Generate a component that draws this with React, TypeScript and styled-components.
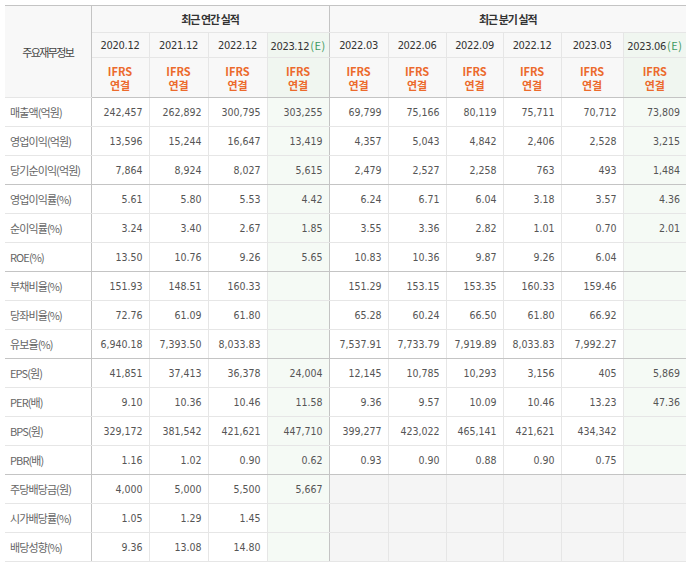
import styled, { createGlobalStyle } from "styled-components";

const GlobalStyle = createGlobalStyle`
	body {
		margin: 0;
		background: #fff;
	}
`;

const NUM_FONT = `"DejaVu Sans Condensed", "DejaVu Sans", "Noto Sans CJK KR", sans-serif`;
const KR_FONT = `"Noto Sans CJK KR", "DejaVu Sans", sans-serif`;

const LINE = "#e6e6e6";
const STRONG_LINE = "#c4c4c4";
const EST_HEAD_BG = "#f0f6f0";
const EST_BG = "#f5faf5";
const HEAD_BG = "#f8f8f8";
const BLANK_BG = "#f5f5f5";

type Period = { label: string; est?: boolean };

const annual: Period[] = [
	{ label: "2020.12" },
	{ label: "2021.12" },
	{ label: "2022.12" },
	{ label: "2023.12", est: true },
];

const quarter: Period[] = [
	{ label: "2022.03" },
	{ label: "2022.06" },
	{ label: "2022.09" },
	{ label: "2022.12" },
	{ label: "2023.03" },
	{ label: "2023.06", est: true },
];

const colWidths = [86, 58, 59, 59, 62, 59, 58, 57, 58, 62, 63];

// null = 회색 빈칸 (배당 항목의 분기 칸)
type Row = { name: string; values: (string | null)[]; groupEnd?: boolean };

const rows: Row[] = [
	{ name: "매출액(억원)", values: ["242,457", "262,892", "300,795", "303,255", "69,799", "75,166", "80,119", "75,711", "70,712", "73,809"] },
	{ name: "영업이익(억원)", values: ["13,596", "15,244", "16,647", "13,419", "4,357", "5,043", "4,842", "2,406", "2,528", "3,215"] },
	{ name: "당기순이익(억원)", values: ["7,864", "8,924", "8,027", "5,615", "2,479", "2,527", "2,258", "763", "493", "1,484"], groupEnd: true },
	{ name: "영업이익률(%)", values: ["5.61", "5.80", "5.53", "4.42", "6.24", "6.71", "6.04", "3.18", "3.57", "4.36"] },
	{ name: "순이익률(%)", values: ["3.24", "3.40", "2.67", "1.85", "3.55", "3.36", "2.82", "1.01", "0.70", "2.01"] },
	{ name: "ROE(%)", values: ["13.50", "10.76", "9.26", "5.65", "10.83", "10.36", "9.87", "9.26", "6.04", ""], groupEnd: true },
	{ name: "부채비율(%)", values: ["151.93", "148.51", "160.33", "", "151.29", "153.15", "153.35", "160.33", "159.46", ""] },
	{ name: "당좌비율(%)", values: ["72.76", "61.09", "61.80", "", "65.28", "60.24", "66.50", "61.80", "66.92", ""] },
	{ name: "유보율(%)", values: ["6,940.18", "7,393.50", "8,033.83", "", "7,537.91", "7,733.79", "7,919.89", "8,033.83", "7,992.27", ""], groupEnd: true },
	{ name: "EPS(원)", values: ["41,851", "37,413", "36,378", "24,004", "12,145", "10,785", "10,293", "3,156", "405", "5,869"] },
	{ name: "PER(배)", values: ["9.10", "10.36", "10.46", "11.58", "9.36", "9.57", "10.09", "10.46", "13.23", "47.36"] },
	{ name: "BPS(원)", values: ["329,172", "381,542", "421,621", "447,710", "399,277", "423,022", "465,141", "421,621", "434,342", ""] },
	{ name: "PBR(배)", values: ["1.16", "1.02", "0.90", "0.62", "0.93", "0.90", "0.88", "0.90", "0.75", ""], groupEnd: true },
	{ name: "주당배당금(원)", values: ["4,000", "5,000", "5,500", "5,667", null, null, null, null, null, null] },
	{ name: "시가배당률(%)", values: ["1.05", "1.29", "1.45", "", null, null, null, null, null, null] },
	{ name: "배당성향(%)", values: ["9.36", "13.08", "14.80", "", null, null, null, null, null, null] },
];

const Wrap = styled.div`
	padding: 5px 6px 0 5px;
`;

const Table = styled.table`
	width: 681px;
	table-layout: fixed;
	border-collapse: collapse;
	border-top: 1px solid ${STRONG_LINE};
	border-bottom: 1px solid ${STRONG_LINE};
	font-family: ${NUM_FONT};
	font-size: 10.5px;
	color: #555;
`;

const Head = styled.thead`
	tr:last-child th {
		border-bottom: 1px solid ${STRONG_LINE};
	}
`;

const HeadCell = styled.th<{ $est?: boolean; $split?: boolean; $h?: number }>`
	height: ${({ $h }) => ($h ? `${$h - 1}px` : "auto")};
	padding: 0;
	background: ${({ $est }) => ($est ? EST_HEAD_BG : HEAD_BG)};
	border-bottom: 1px solid ${LINE};
	border-left: 1px solid ${({ $split }) => ($split ? STRONG_LINE : LINE)};
	font-weight: normal;
	text-align: center;
	vertical-align: middle;
	color: #333;
`;

const CornerCell = styled(HeadCell)`
	border-left: none;
	border-right: 1px solid ${STRONG_LINE};
	font-family: ${KR_FONT};
	font-size: 11px;
	letter-spacing: -1.6px;
	color: #444;
`;

const GroupTitle = styled(HeadCell)`
	font-family: ${KR_FONT};
	font-size: 11px;
	font-weight: bold;
	letter-spacing: -1px;
	color: #333;
`;

const Period = styled(HeadCell)`
	font-size: 11px;
	letter-spacing: -0.3px;
`;

const Est = styled.span`
	color: #3c9a5f;
	font-family: ${KR_FONT};
	letter-spacing: 0.5px;
	margin-left: 1px;
`;

const Basis = styled(HeadCell)`
	font-family: ${KR_FONT};
	font-size: 11px;
	font-weight: bold;
	line-height: 14px;
	color: #ec6a2c;
`;

const BodyRow = styled.tr<{ $groupEnd?: boolean }>`
	td,
	th {
		height: 28px;
		border-bottom: 1px solid ${({ $groupEnd }) => ($groupEnd ? STRONG_LINE : LINE)};
	}
`;

const RowName = styled.th`
	padding: 0 0 0 5px;
	border-right: 1px solid ${STRONG_LINE};
	text-align: left;
	font-family: ${KR_FONT};
	font-size: 11px;
	font-weight: normal;
	letter-spacing: -0.9px;
	color: #666;
	white-space: nowrap;
`;

const Value = styled.td<{ $est?: boolean; $blank?: boolean; $split?: boolean }>`
	padding: 0 6px 0 0;
	text-align: right;
	background: ${({ $est, $blank }) => ($blank ? BLANK_BG : $est ? EST_BG : "#fff")};
	border-left: 1px solid ${({ $split }) => ($split ? STRONG_LINE : LINE)};
	white-space: nowrap;
`;

export default function App() {
	const periods = [...annual, ...quarter];

	return (
		<Wrap>
			<GlobalStyle />
			<Table>
				<colgroup>
					{colWidths.map((w, i) => (
						<col key={i} style={{ width: w }} />
					))}
				</colgroup>
				<Head>
					<tr>
						<CornerCell rowSpan={3}>주요재무정보</CornerCell>
						<GroupTitle colSpan={4} $h={27}>최근 연간 실적</GroupTitle>
						<GroupTitle colSpan={6} $h={27} $split>
							최근 분기 실적
						</GroupTitle>
					</tr>
					<tr>
						{periods.map((p, i) => (
							<Period key={i} $est={p.est} $split={i === 4} $h={25}>
								{p.label}
								{p.est && <Est>(E)</Est>}
							</Period>
						))}
					</tr>
					<tr>
						{periods.map((p, i) => (
							<Basis key={i} $est={p.est} $split={i === 4} $h={40}>
								IFRS
								<br />
								연결
							</Basis>
						))}
					</tr>
				</Head>
				<tbody>
					{rows.map((row) => (
						<BodyRow key={row.name} $groupEnd={row.groupEnd}>
							<RowName>{row.name}</RowName>
							{row.values.map((v, i) => (
								<Value key={i} $est={periods[i].est} $blank={v === null} $split={i === 4}>
									{v}
								</Value>
							))}
						</BodyRow>
					))}
				</tbody>
			</Table>
		</Wrap>
	);
}
